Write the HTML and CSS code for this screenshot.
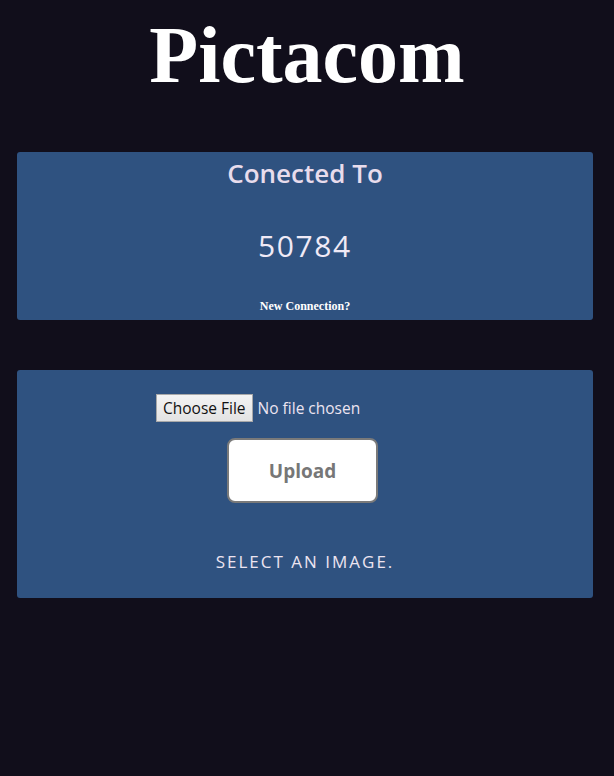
FILE: index.html
```
<!DOCTYPE html>
<html lang="en">
<head>
  <meta charset="UTF-8" />
  <meta name="viewport" content="width=device-width, initial-scale=1" />
  <title>Pictacom</title>
  <link rel="stylesheet" href="styles.css">
</head>
<body>
  <h1 class="brand">Pictacom</h1>

  <div class="card connect-card">
    <div class="connect-title">Conected To</div>
    <div class="connect-id" id="peerId">50784</div>
    <a class="new-link" href="#">New Connection?</a>
  </div>

  <div class="card upload-card">
    <input type="file" id="fileInput" accept="image/*" />
    <button class="upload-btn" id="uploadBtn">Upload</button>
    <div class="status" id="status">Select an image.</div>
  </div>
</body>
</html>
```

FILE: styles.css
```
body {
  margin: 0;
  padding: 0;
  background-color: #110e1b;
  font-family: 'Open Sans', 'Noto Sans', sans-serif;
  color: #ece4f0;
}

.brand {
  margin: 11px 0 52px;
  font-family: 'Liberation Serif', 'Times New Roman', serif;
  font-size: 80px;
  font-weight: bold;
  line-height: 89px;
  color: #ffffff;
  text-align: center;
}

.card {
  margin: 0 21px 0 17px;
  background-color: #2f5280;
  border-radius: 3px;
  display: flex;
  flex-direction: column;
  align-items: center;
}

.connect-card {
  padding: 5px 0 6px;
}

.connect-title {
  font-size: 26px;
  font-weight: 600;
  line-height: 32px;
  color: #e8dcec;
}

.connect-id {
  margin-top: 37px;
  font-size: 30px;
  line-height: 40px;
  letter-spacing: 1.6px;
  color: #f0eaf6;
}

.new-link {
  margin-top: 32px;
  font-family: 'Liberation Serif', 'Times New Roman', serif;
  font-size: 12px;
  font-weight: bold;
  line-height: 16px;
  color: #ffffff;
  text-decoration: none;
}

.upload-card {
  margin-top: 50px;
  padding: 24px 0 25px;
}

#fileInput {
  width: 298px;
  height: 28px;
  font-family: 'Open Sans', 'Noto Sans', sans-serif;
  font-size: 15.5px;
  color: #ece4f0;
}

#fileInput::file-selector-button {
  height: 28px;
  margin-right: 5px;
  padding: 0 6px;
  font-family: 'Open Sans', 'Noto Sans', sans-serif;
  font-size: 15.5px;
  color: #111111;
  background: linear-gradient(#f3f3f3, #e3e3e3);
  border: 1px solid #a8a8a8;
  border-radius: 0;
}

.upload-btn {
  margin: 16px 5px 0 0;
  width: 151px;
  height: 65px;
  font-family: 'Open Sans', 'Noto Sans', sans-serif;
  font-size: 19px;
  font-weight: bold;
  color: #777777;
  background-color: #ffffff;
  border: 2px solid #7a7a7a;
  border-radius: 8px;
  cursor: pointer;
}

.status {
  margin-top: 48px;
  font-size: 17px;
  line-height: 22px;
  letter-spacing: 2px;
  text-transform: uppercase;
  color: #ece4f0;
}
```
